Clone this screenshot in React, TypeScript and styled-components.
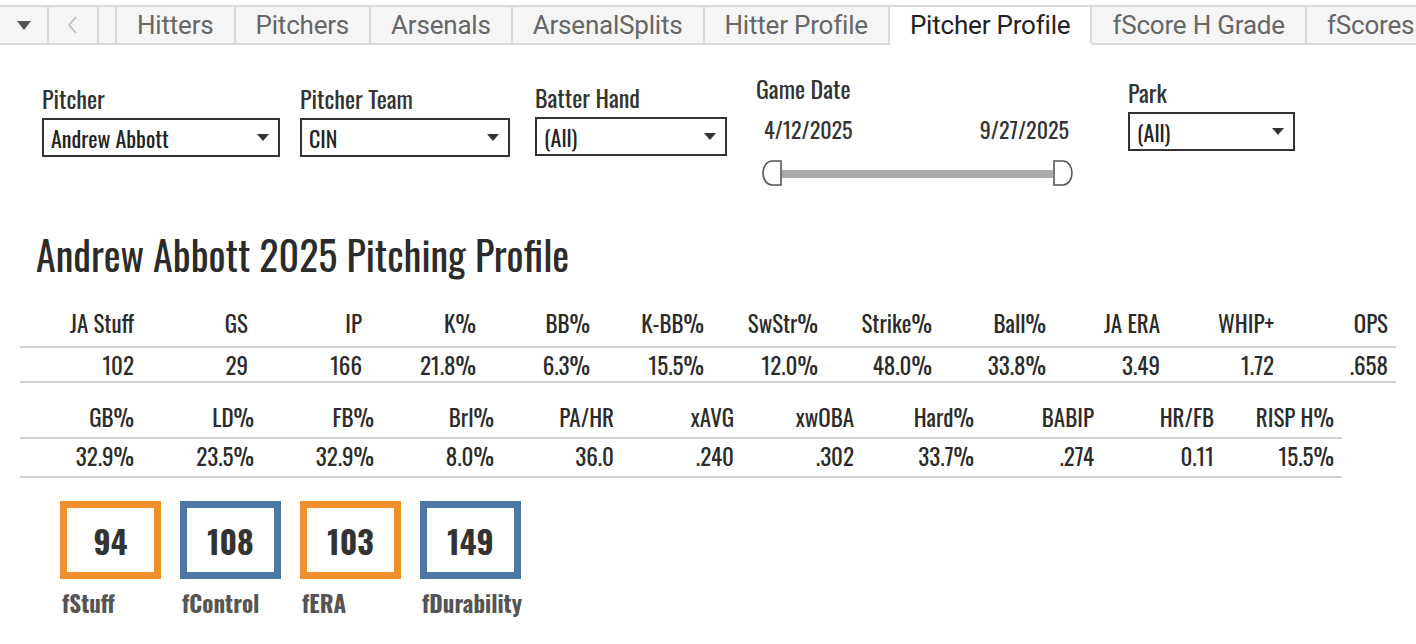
import React from "react";
import styled, { createGlobalStyle } from "styled-components";

const COND = `"Oswald", "Roboto Condensed", "DejaVu Sans Condensed", "Liberation Sans", sans-serif`;

const GlobalStyle = createGlobalStyle`
  html, body {
    margin: 0;
    padding: 0;
    background: #ffffff;
  }
  body {
    width: 1416px;
    height: 644px;
    overflow: hidden;
    font-family: ${COND};
    color: #333333;
  }
`;

const TabBar = styled.div`
  display: flex;
  height: 45px;
  padding-top: 5px;
  box-sizing: border-box;
  font-family: Roboto, "Open Sans", sans-serif;
  font-size: 26px;
  letter-spacing: -0.2px;
  white-space: nowrap;
  overflow: hidden;
`;

const NavButton = styled.div<{ $w: number }>`
  width: ${(p) => p.$w}px;
  flex: none;
  display: flex;
  align-items: center;
  justify-content: center;
  background: #f5f5f5;
  border-top: 2px solid #d9d9d9;
  border-bottom: 2px solid #d9d9d9;
  border-right: 2px solid #d9d9d9;
  box-sizing: border-box;
`;

const Tab = styled.div<{ $active?: boolean }>`
  flex: none;
  display: flex;
  align-items: center;
  padding: 0 20px;
  background: ${(p) => (p.$active ? "#ffffff" : "#f5f5f5")};
  border-top: 2px solid #d9d9d9;
  border-right: 2px solid #d9d9d9;
  border-bottom: 2px solid ${(p) => (p.$active ? "transparent" : "#d9d9d9")};
  color: ${(p) => (p.$active ? "#222" : "#666")};
  box-sizing: border-box;
`;

const FilterRow = styled.div`
  position: relative;
  height: 175px;
`;

const Filter = styled.div<{ $x: number; $y: number }>`
  position: absolute;
  left: ${(p) => p.$x}px;
  top: ${(p) => p.$y}px;
`;

const FilterLabel = styled.div`
  font-size: 24px;
  color: #333;
  line-height: 28px;
  margin-bottom: 6px;
`;

const Select = styled.div<{ $w: number }>`
  width: ${(p) => p.$w}px;
  height: 39px;
  border: 2px solid #333;
  box-sizing: border-box;
  display: flex;
  align-items: center;
  justify-content: space-between;
  padding: 0 9px 0 7px;
  font-size: 22px;
  line-height: 26px;
  color: #222;
`;

const Caret = () => (
  <svg width="12" height="8" viewBox="0 0 12 8">
    <path d="M0 0 L12 0 L6 7 Z" fill="#333" />
  </svg>
);

const DateBox = styled.div`
  width: 317px;
`;

const DateValues = styled.div`
  display: flex;
  justify-content: space-between;
  font-size: 22px;
  line-height: 26px;
  color: #333;
  padding: 0 4px 0 8px;
  margin-top: 14px;
`;

const Slider = styled.div`
  display: flex;
  align-items: center;
  margin-top: 18px;
  margin-left: 6px;
  height: 27px;
`;

const Track = styled.div`
  flex: 1;
  height: 8px;
  background: #aaaaaa;
`;

const Handle = ({ flip }: { flip?: boolean }) => (
  <svg width="20" height="27" viewBox="0 0 20 27" style={{ transform: flip ? "scaleX(-1)" : undefined }}>
    <path d="M19 1 L10 1 A9 12 0 0 0 10 25 L19 25 Z" fill="#fff" stroke="#555" strokeWidth="1.6" />
  </svg>
);

const Title = styled.h1`
  margin: 9px 0 0 36px;
  font-weight: normal;
  font-size: 40px;
  line-height: 50px;
  color: #2b2b2b;
`;

const StatTable = styled.div<{ $w: number; $gap: number }>`
  margin: ${(p) => p.$gap}px 0 0 20px;
  width: ${(p) => p.$w}px;
  font-size: 23px;
  color: #2b2b2b;
`;

const StatRow = styled.div<{ $cols: number; $colW: number; $h: number; $pb: number }>`
  display: grid;
  grid-template-columns: repeat(${(p) => p.$cols}, ${(p) => p.$colW}px);
  height: ${(p) => p.$h}px;
  align-items: end;
  padding-bottom: ${(p) => p.$pb}px;
  border-bottom: 2px solid #cfcfcf;
  box-sizing: border-box;
`;

const Cell = styled.div<{ $pad: number }>`
  text-align: right;
  padding-right: ${(p) => p.$pad}px;
  line-height: 26px;
`;

const Scores = styled.div`
  display: flex;
  gap: 19px;
  margin: 23px 0 0 60px;
`;

const ScoreItem = styled.div`
  display: flex;
  flex-direction: column;
`;

const ScoreBox = styled.div<{ $color: string }>`
  width: 101px;
  height: 78px;
  border: 7px solid ${(p) => p.$color};
  box-sizing: border-box;
  display: flex;
  align-items: center;
  justify-content: center;
  font-size: 32px;
  font-weight: bold;
  color: #333;
`;

const ScoreLabel = styled.div`
  margin-top: 10px;
  padding-left: 2px;
  font-size: 23px;
  line-height: 28px;
  font-weight: bold;
  color: #555;
`;

const row1 = [
  ["JA Stuff", "102"],
  ["GS", "29"],
  ["IP", "166"],
  ["K%", "21.8%"],
  ["BB%", "6.3%"],
  ["K-BB%", "15.5%"],
  ["SwStr%", "12.0%"],
  ["Strike%", "48.0%"],
  ["Ball%", "33.8%"],
  ["JA ERA", "3.49"],
  ["WHIP+", "1.72"],
  ["OPS", ".658"],
];

const row2 = [
  ["GB%", "32.9%"],
  ["LD%", "23.5%"],
  ["FB%", "32.9%"],
  ["Brl%", "8.0%"],
  ["PA/HR", "36.0"],
  ["xAVG", ".240"],
  ["xwOBA", ".302"],
  ["Hard%", "33.7%"],
  ["BABIP", ".274"],
  ["HR/FB", "0.11"],
  ["RISP H%", "15.5%"],
];

const scores = [
  { v: "94", l: "fStuff", c: "#f28e2b" },
  { v: "108", l: "fControl", c: "#4e79a7" },
  { v: "103", l: "fERA", c: "#f28e2b" },
  { v: "149", l: "fDurability", c: "#4e79a7" },
];

const tabs = [
  "Hitters",
  "Pitchers",
  "Arsenals",
  "ArsenalSplits",
  "Hitter Profile",
  "Pitcher Profile",
  "fScore H Grade",
  "fScores",
];

type TableProps = {
  data: string[][];
  colW: number;
  pad: number;
  extra: number;
  gap: number;
  head: [number, number];
  body: [number, number];
};

function Table({ data, colW, pad, extra, gap, head, body }: TableProps) {
  return (
    <StatTable $w={data.length * colW + extra} $gap={gap}>
      <StatRow $cols={data.length} $colW={colW} $h={head[0]} $pb={head[1]}>
        {data.map(([h]) => (
          <Cell key={h} $pad={pad}>{h}</Cell>
        ))}
      </StatRow>
      <StatRow $cols={data.length} $colW={colW} $h={body[0]} $pb={body[1]}>
        {data.map(([h, v]) => (
          <Cell key={h} $pad={pad}>{v}</Cell>
        ))}
      </StatRow>
    </StatTable>
  );
}

export default function App() {
  return (
    <>
      <GlobalStyle />
      <TabBar>
        <NavButton $w={49}>
          <svg width="14" height="9" viewBox="0 0 14 9">
            <path d="M0 0 L14 0 L7 9 Z" fill="#555" />
          </svg>
        </NavButton>
        <NavButton $w={50}>
          <svg width="10" height="18" viewBox="0 0 10 18">
            <path d="M8 1 L1 9 L8 17" fill="none" stroke="#bbb" strokeWidth="1.5" />
          </svg>
        </NavButton>
        <NavButton $w={18} />
        {tabs.map((t) => (
          <Tab key={t} $active={t === "Pitcher Profile"}>
            {t}
          </Tab>
        ))}
      </TabBar>

      <FilterRow>
        <Filter $x={42} $y={39}>
          <FilterLabel>Pitcher</FilterLabel>
          <Select $w={238}>
            Andrew Abbott <Caret />
          </Select>
        </Filter>
        <Filter $x={300} $y={39}>
          <FilterLabel>Pitcher Team</FilterLabel>
          <Select $w={210}>
            CIN <Caret />
          </Select>
        </Filter>
        <Filter $x={535} $y={38}>
          <FilterLabel>Batter Hand</FilterLabel>
          <Select $w={192}>
            (All) <Caret />
          </Select>
        </Filter>
        <Filter $x={756} $y={29}>
          <FilterLabel>Game Date</FilterLabel>
          <DateBox>
            <DateValues>
              <span>4/12/2025</span>
              <span>9/27/2025</span>
            </DateValues>
            <Slider>
              <Handle />
              <Track />
              <Handle flip />
            </Slider>
          </DateBox>
        </Filter>
        <Filter $x={1128} $y={33}>
          <FilterLabel>Park</FilterLabel>
          <Select $w={167}>
            (All) <Caret />
          </Select>
        </Filter>
      </FilterRow>

      <Title>Andrew Abbott 2025 Pitching Profile</Title>

      <Table data={row1} colW={114} pad={0} extra={8} gap={29} head={[40, 10]} body={[35, 3]} />
      <Table data={row2} colW={120} pad={6} extra={2} gap={16} head={[40, 7]} body={[39, 7]} />

      <Scores>
        {scores.map((s) => (
          <ScoreItem key={s.l}>
            <ScoreBox $color={s.c}>{s.v}</ScoreBox>
            <ScoreLabel>{s.l}</ScoreLabel>
          </ScoreItem>
        ))}
      </Scores>
    </>
  );
}
